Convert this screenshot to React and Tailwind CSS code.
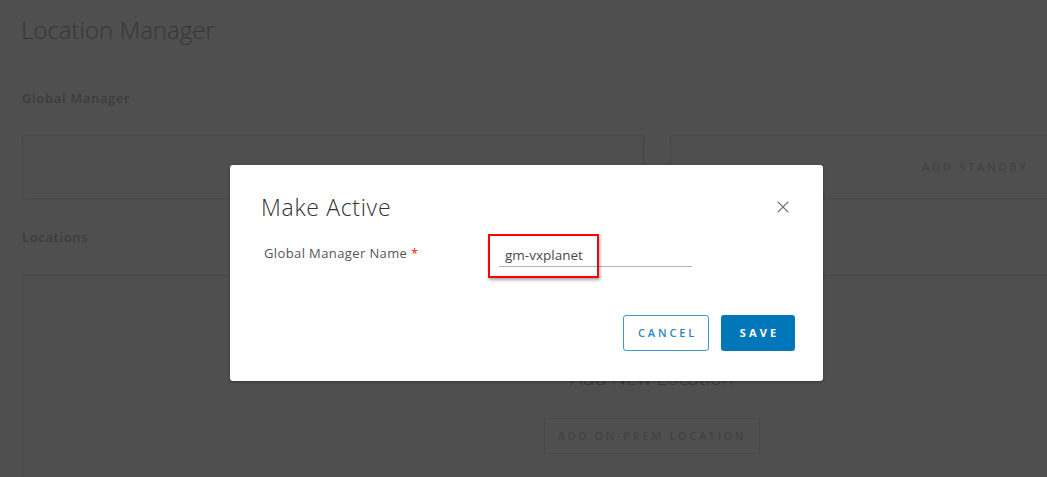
import { X } from 'lucide-react';

export default function App() {
  return (
    <div className="relative w-[1047px] h-[477px] overflow-hidden bg-[#4f4f4f] font-['Open_Sans',_sans-serif]">
      {/* ── dimmed page behind ── */}
      <div className="w-[1300px] pl-[22px] pt-[14px]">
        <h1 className="text-[24px] leading-[32px] font-light text-[#363636] -ml-[1px]">Location Manager</h1>
        <h2 className="mt-[43px] text-[13px] leading-[18px] font-semibold tracking-[0.05em] text-[#3c3c3c]">Global Manager</h2>
        <div className="mt-[28px] flex gap-[26px]">
          <div className="shrink-0 w-[622px] h-[64px] rounded-[3px] border border-[#474747]" />
          <div className="shrink-0 w-[622px] h-[64px] rounded-[3px] border border-[#474747] flex items-center pl-[251px]">
            <span className="text-[11px] font-semibold tracking-[0.25em] text-[#424242]">ADD STANDBY</span>
          </div>
        </div>
        <h2 className="mt-[29px] text-[13px] leading-[18px] font-semibold tracking-[0.05em] text-[#3c3c3c]">Locations</h2>
        <div className="mt-[29px] w-[1260px] h-[240px] rounded-[3px] border border-[#474747] flex flex-col items-center pt-[90px]">
          <div className="text-[20px] leading-[24px] font-light text-[#363636]">Add New Location</div>
          <div className="mt-[28px] h-[36px] px-[13px] rounded-[3px] border border-[#474747] flex items-center">
            <span className="text-[11px] font-semibold tracking-[0.24em] text-[#424242]">ADD ON-PREM LOCATION</span>
          </div>
        </div>
      </div>

      {/* ── modal ── */}
      <div className="absolute left-[230px] top-[165px] w-[593px] h-[216px] bg-white rounded-[3px] shadow-[0_1px_3px_rgba(0,0,0,0.35)] flex flex-col pl-[31px] pr-[28px] pt-[26px] pb-[30px]">
        <div className="flex items-center justify-between">
          <h3 className="text-[23px] leading-[32px] font-light tracking-[0.03em] text-[#313131]">Make Active</h3>
          <X size={20} strokeWidth={1.3} className="text-[#737373] mr-[2px]" />
        </div>
        <div className="mt-[19px] flex items-start">
          <label className="w-[238px] pl-[3px] pt-[1px] text-[13px] leading-[20px] tracking-[0.03em] text-[#565656]">
            Global Manager Name <span className="text-[#e12200]">*</span>
          </label>
          <div className="relative">
            <div className="w-[193px] h-[25px] border-b border-[#b5b5b5] pl-[6px] pt-[3px] text-[13.5px] text-[#4a4a4a]">
              gm-vxplanet
            </div>
            {/* annotation box */}
            <div className="absolute -left-[11px] -top-[8px] w-[111px] h-[44px] border-2 border-[#ff0000] shadow-[1px_2px_3px_rgba(0,0,0,0.35)]" />
          </div>
        </div>
        <div className="mt-auto flex justify-end gap-[12px]">
          <button className="h-[36px] w-[86px] rounded-[3px] border border-[#3c9ad0] pl-[3px] text-[11px] font-semibold tracking-[0.26em] text-[#2b86c1]">
            CANCEL
          </button>
          <button className="h-[36px] w-[74px] rounded-[3px] bg-[#0077b8] pl-[3px] text-[11px] font-bold tracking-[0.28em] text-white">
            SAVE
          </button>
        </div>
      </div>
    </div>
  );
}
